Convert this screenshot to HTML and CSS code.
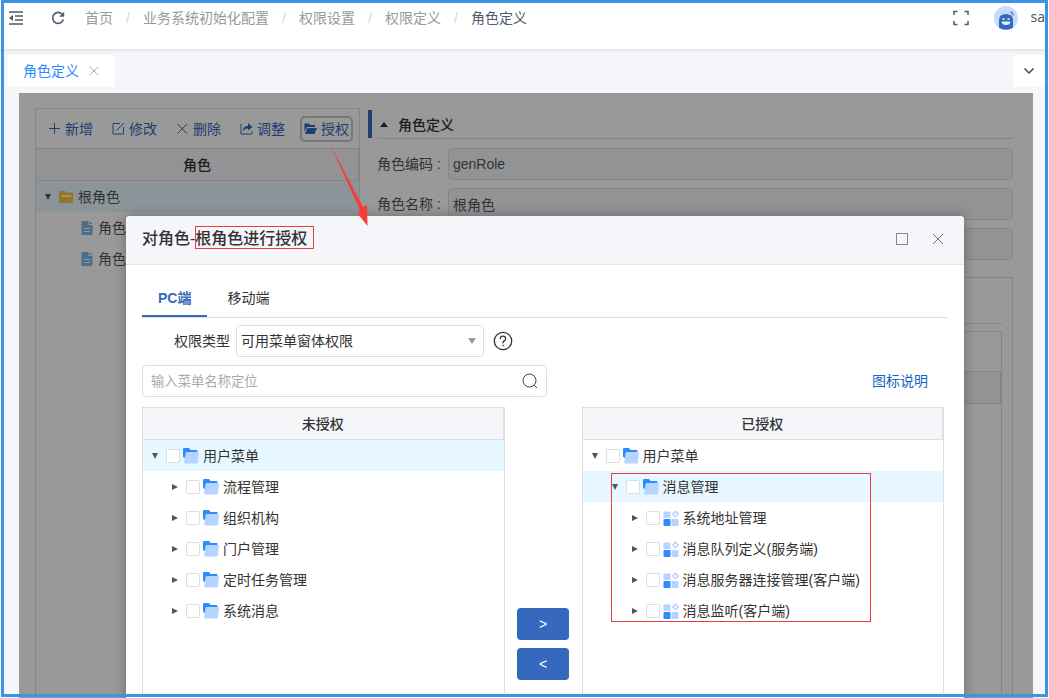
FILE: index.html
```html
<!DOCTYPE html>
<html lang="zh-CN">
<head>
<meta charset="utf-8">
<title>角色定义</title>
<link rel="stylesheet" href="styles.css">
</head>
<body>
<svg class="sprite" aria-hidden="true">
  <symbol id="i-folder" viewBox="0 0 16 16">
    <path d="M0 1.2Q0 0 1.200 0H6L7.500 2H13.500Q14.500 2 14.500 3V8H2V10Q0 10 0 8Z" fill="#2a8cff"/>
    <path d="M4 4H15Q16 4 15.900 5L15 14Q14.900 15.500 13.500 15.500H2.500Q1 15.500 1.200 14L2.500 5.200Q2.700 4 4 4Z" fill="#b5d4ff"/>
  </symbol>
  <symbol id="i-app" viewBox="0 0 16 16">
    <rect x="0.500" y="1.500" width="7" height="6.500" rx="1" fill="#b5d4ff"/>
    <rect x="0.500" y="9" width="7" height="7" rx="1" fill="#2a8cff"/>
    <rect x="8.500" y="9" width="7" height="7" rx="1" fill="#b5d4ff"/>
    <path d="M12.500 1.200L15.300 4L12.500 6.800L9.700 4Z" fill="none" stroke="#b5d4ff" stroke-width="1.500"/>
  </symbol>
  <symbol id="i-down" viewBox="0 0 8 8"><path d="M1 1H7L4 7Z" fill="#555"/></symbol>
  <symbol id="i-right" viewBox="0 0 8 8"><path d="M1 1V7L7 4Z" fill="#555"/></symbol>
  <symbol id="i-close" viewBox="0 0 12 12"><path d="M1 1L11 11M11 1L1 11" fill="none" stroke="currentColor"/></symbol>
  <symbol id="i-file" viewBox="0 0 12 14">
    <path d="M1.500 0H7.500V4H11.500V12.500Q11.500 14 10 14H1.500Q0.500 14 0.500 13V1Q0.500 0 1.500 0ZM8.500 0L11.500 3H8.500Z" fill="#7fb9e8"/>
    <path d="M3 7.500H9M3 10.500H9" stroke="#fff"/>
  </symbol>
</svg>

<div class="page">
  <header class="topbar">
    <button class="icon-btn" aria-label="收起菜单">
      <svg width="16" height="14" viewBox="0 0 16 14"><path d="M1 1H15M7 5H15M7 9H15M1 13H15" stroke="#515a6e" stroke-width="1.500"/><path d="M1 7L5 4V10Z" fill="#515a6e"/></svg>
    </button>
    <button class="icon-btn refresh" aria-label="刷新">
      <svg width="14" height="14" viewBox="0 0 14 14"><path d="M11.500 3.500A5.500 5.500 0 1 0 12.400 8.500" fill="none" stroke="#515a6e" stroke-width="1.600"/><path d="M13.200 0.800V5.800H8.200Z" fill="#515a6e"/></svg>
    </button>
    <nav aria-label="路径">
      <ol class="crumbs">
        <li><a href="#">首页</a></li>
        <li><a href="#">业务系统初始化配置</a></li>
        <li><a href="#">权限设置</a></li>
        <li><a href="#">权限定义</a></li>
        <li class="current">角色定义</li>
      </ol>
    </nav>
    <div class="user">
      <button class="icon-btn" aria-label="全屏">
        <svg width="16" height="16" viewBox="0 0 16 16"><path d="M1 5V1.500H4.500M11.500 1.500H15V5M15 11V14.500H11.500M4.500 14.500H1V11" fill="none" stroke="#515a6e" stroke-width="1.500"/></svg>
      </button>
      <svg class="avatar" width="24" height="24" viewBox="0 0 24 24"><circle cx="12" cy="12" r="12" fill="#c5dcff"/><path d="M5 21.700V14Q5 8 12 8T19 14V21.700Q12 26 5 21.700Z" fill="#3569bd"/><path d="M8.500 13H10.500M13.500 13H15.500" stroke="#fff" stroke-width="1.500" fill="none"/><path d="M7.500 15.500H16.500Q16 19 12 19T7.500 15.500Z" fill="#e4efff"/><path d="M16 6L17.500 7.500M17.800 5.500L19 8.500M18.500 9L19.800 9" stroke="#3569bd" fill="none"/></svg>
      <span class="username">sa</span>
    </div>
  </header>

  <div class="tabbar">
    <div class="page-tab"><a href="#">角色定义</a>
      <button class="icon-btn muted" aria-label="关闭标签"><svg width="10" height="10"><use href="#i-close"/></svg></button>
    </div>
    <button class="tab-menu" aria-label="更多标签"><svg width="12" height="8" viewBox="0 0 12 8"><path d="M1.500 1.500L6 6L10.500 1.500" fill="none" stroke="#444" stroke-width="1.500"/></svg></button>
  </div>

  <main class="workspace">
    <section class="roles">
      <div class="tools">
        <button><svg width="13" height="13" viewBox="0 0 13 13"><path d="M6.500 1V12M1 6.500H12" stroke="currentColor"/></svg>新增</button>
        <button><svg width="13" height="13" viewBox="0 0 13 13"><path d="M8 1.500H1V12H11.500V5M4.500 8.500L12 1" fill="none" stroke="currentColor"/></svg>修改</button>
        <button><svg width="13" height="13" viewBox="0 0 13 13"><path d="M1.500 2L11 11.500M11 2L1.500 11.500" stroke="currentColor"/></svg>删除</button>
        <button><svg width="13" height="13" viewBox="0 0 13 13"><path d="M1 2V12H12V9" fill="none" stroke="currentColor"/><path d="M3 9Q3 4 8 4V1L12.500 5L8 8.500V6.500Q5 6 3 9Z" fill="currentColor"/></svg>调整</button>
        <button class="focused"><svg width="13" height="13" viewBox="0 0 13 13"><path d="M0.500 1.500H5L6 3H11V5H3L0.500 10ZM3.500 6H13L10.500 12H1Z" fill="currentColor"/></svg>授权</button>
      </div>
      <h2 class="list-head">角色</h2>
      <ul class="tree role-tree">
        <li class="row selected"><svg class="caret" width="8" height="8"><use href="#i-down"/></svg><svg width="14" height="12" viewBox="0 0 14 12"><path d="M0 0H6L7 1.500H14V12H0Z" fill="#f5c343"/><path d="M2 5H12" stroke="#fff" stroke-width="1.500"/></svg><span>根角色</span></li>
        <li class="row leaf"><svg width="12" height="14"><use href="#i-file"/></svg><span>角色管理</span></li>
        <li class="row leaf"><svg width="12" height="14"><use href="#i-file"/></svg><span>角色查询</span></li>
      </ul>
    </section>

    <section class="detail">
      <div class="detail-title"><h2><svg width="8" height="5" viewBox="0 0 8 5"><path d="M0 5L4 0L8 5Z" fill="#333"/></svg>角色定义</h2></div>
      <form class="fields">
        <label for="code">角色编码 :</label><input id="code" value="genRole" readonly>
        <label for="name">角色名称 :</label><input id="name" value="根角色" readonly>
        <label for="note"></label><input id="note" aria-label="备注" readonly>
      </form>
      <div class="sub"><div class="sub-tabs"></div><div class="sub-grid"><div class="sub-tools"></div><div class="sub-head"></div></div></div>
    </section>

    <div class="mask"></div>

    <div class="dialog" role="dialog" aria-labelledby="dlg-title">
      <div class="dialog-head">
        <h1 id="dlg-title">对角色-<span class="marked">根角色进行授权</span></h1>
        <div class="window-btns">
          <button class="icon-btn" aria-label="最大化"><svg width="12" height="12" viewBox="0 0 12 12"><rect x="0.500" y="0.500" width="11" height="11" fill="none" stroke="#888"/></svg></button>
          <button class="icon-btn" aria-label="关闭"><svg width="12" height="12"><use href="#i-close"/></svg></button>
        </div>
      </div>
      <div class="dialog-body">
        <div class="tabs" role="tablist">
          <button role="tab" aria-selected="true" class="active">PC端</button>
          <button role="tab" aria-selected="false">移动端</button>
        </div>
        <div class="type-line">
          <label for="type">权限类型</label>
          <select id="type"><option>可用菜单窗体权限</option></select>
          <button class="icon-btn help" aria-label="帮助"><svg width="20" height="20" viewBox="0 0 20 20"><circle cx="10" cy="10" r="8.700" fill="none" stroke="#333" stroke-width="1.300"/><path d="M7.300 8Q7.300 5.200 10 5.200T12.700 7.800Q12.700 9 11.200 9.900T10 12.300M10 13.800V15.300" fill="none" stroke="#333" stroke-width="1.300"/></svg></button>
        </div>
        <div class="search-line">
          <div class="search">
            <input type="search" placeholder="输入菜单名称定位" aria-label="输入菜单名称定位">
            <button class="icon-btn" aria-label="搜索"><svg width="16" height="16" viewBox="0 0 16 16"><circle cx="7.500" cy="7.500" r="6.500" fill="none" stroke="#444"/><path d="M12.300 12.300L15 15" stroke="#444"/></svg></button>
          </div>
          <a class="legend" href="#">图标说明</a>
        </div>
        <div class="transfer">
          <section class="panel">
            <h2 class="list-head">未授权</h2>
            <ul class="tree">
              <li class="row selected"><svg class="caret" width="8" height="8"><use href="#i-down"/></svg><label><input type="checkbox"><svg width="16" height="16"><use href="#i-folder"/></svg>用户菜单</label></li>
              <li class="row l2"><svg class="caret" width="8" height="8"><use href="#i-right"/></svg><label><input type="checkbox"><svg width="16" height="16"><use href="#i-folder"/></svg>流程管理</label></li>
              <li class="row l2"><svg class="caret" width="8" height="8"><use href="#i-right"/></svg><label><input type="checkbox"><svg width="16" height="16"><use href="#i-folder"/></svg>组织机构</label></li>
              <li class="row l2"><svg class="caret" width="8" height="8"><use href="#i-right"/></svg><label><input type="checkbox"><svg width="16" height="16"><use href="#i-folder"/></svg>门户管理</label></li>
              <li class="row l2"><svg class="caret" width="8" height="8"><use href="#i-right"/></svg><label><input type="checkbox"><svg width="16" height="16"><use href="#i-folder"/></svg>定时任务管理</label></li>
              <li class="row l2"><svg class="caret" width="8" height="8"><use href="#i-right"/></svg><label><input type="checkbox"><svg width="16" height="16"><use href="#i-folder"/></svg>系统消息</label></li>
            </ul>
          </section>
          <div class="moves">
            <button aria-label="授权">&gt;</button>
            <button aria-label="取消授权">&lt;</button>
          </div>
          <section class="panel">
            <h2 class="list-head">已授权</h2>
            <ul class="tree">
              <li class="row"><svg class="caret" width="8" height="8"><use href="#i-down"/></svg><label><input type="checkbox"><svg width="16" height="16"><use href="#i-folder"/></svg>用户菜单</label></li>
              <li class="row l2 selected"><svg class="caret" width="8" height="8"><use href="#i-down"/></svg><label><input type="checkbox"><svg width="16" height="16"><use href="#i-folder"/></svg>消息管理</label></li>
              <li class="row l3"><svg class="caret" width="8" height="8"><use href="#i-right"/></svg><label><input type="checkbox"><svg width="16" height="16"><use href="#i-app"/></svg>系统地址管理</label></li>
              <li class="row l3"><svg class="caret" width="8" height="8"><use href="#i-right"/></svg><label><input type="checkbox"><svg width="16" height="16"><use href="#i-app"/></svg>消息队列定义(服务端)</label></li>
              <li class="row l3"><svg class="caret" width="8" height="8"><use href="#i-right"/></svg><label><input type="checkbox"><svg width="16" height="16"><use href="#i-app"/></svg>消息服务器连接管理(客户端)</label></li>
              <li class="row l3"><svg class="caret" width="8" height="8"><use href="#i-right"/></svg><label><input type="checkbox"><svg width="16" height="16"><use href="#i-app"/></svg>消息监听(客户端)</label></li>
            </ul>
            <div class="mark-box"></div>
          </section>
        </div>
      </div>
    </div>
    <svg class="arrow" width="42" height="84" viewBox="0 0 42 84" aria-hidden="true"><path d="M1 0L34 63L38 61L38.500 82L29 70L31 66Z" fill="#fb3a3a"/></svg>
  </main>
  <div class="frame"></div>
</div>
</body>
</html>
```
FILE: styles.css
```css
* { box-sizing: border-box; }

body {
  margin: 0;
  font: 14px/20px "Liberation Sans", "Noto Sans CJK SC", sans-serif;
  color: #333;
}

h1, h2, ul, ol { margin: 0; padding: 0; list-style: none; }
h1, h2 { font-size: 14px; font-weight: 500; }
a { color: inherit; text-decoration: none; }
svg { flex: none; display: block; }
button, select { font: inherit; color: inherit; }
.sprite { position: absolute; width: 0; height: 0; }

.page {
  position: relative;
  display: flex;
  flex-direction: column;
  height: 100vh;
  overflow: hidden;
  background: #f5f6f9;
}

.icon-btn {
  display: flex;
  padding: 0;
  border: 0;
  background: none;
  color: #777;
}

/* top bar */
.topbar {
  flex: none;
  display: flex;
  align-items: flex-start;
  height: 49px;
  padding: 6px 4px 0 8px;
  background: #fff;
  box-shadow: 0 1px 4px rgba(0, 21, 41, 0.12);
  white-space: nowrap;
  z-index: 1;
}
.topbar .icon-btn { height: 24px; align-items: center; }
.topbar .refresh { margin: 0 20px 0 27px; }
.crumbs { display: flex; line-height: 24px; color: #999; }
.crumbs li + li::before {
  content: "/";
  display: inline-block;
  width: 30px;
  text-align: center;
  color: #d3d6dc;
}
.crumbs .current { color: #515a6e; }
.user { display: flex; margin-left: auto; }
.avatar { margin: 0 12px 0 25px; }
.username { font-family: "Noto Sans", sans-serif; line-height: 22px; color: #515a6e; }

/* page tabs */
.tabbar { flex: none; display: flex; padding: 6px 4px 6px 7px; }
.page-tab {
  display: flex;
  align-items: center;
  gap: 10px;
  height: 32px;
  padding: 0 16px;
  border-radius: 3px;
  background: #fff;
  color: #2a8cff;
}
.muted { color: #999; }
.tab-menu {
  display: flex;
  align-items: center;
  justify-content: center;
  width: 32px;
  margin-left: auto;
  padding: 0;
  border: 0;
  border-radius: 3px 0 0 3px;
  background: #fff;
}

/* workspace */
.workspace {
  position: relative;
  flex: 1;
  display: flex;
  gap: 8px;
  min-height: 0;
  margin: 0 16px 0 19px;
  padding: 15px 20px 0 16px;
  background: #fff;
}
.mask { position: absolute; inset: 0; background: rgba(0, 0, 0, 0.4); }

.roles {
  width: 325px;
  border: 1px solid #dcdee2;
  border-bottom: 0;
}
.tools {
  display: flex;
  align-items: center;
  gap: 19px;
  height: 39px;
  padding-left: 12px;
}
.tools button {
  display: flex;
  align-items: center;
  gap: 4px;
  height: 18px;
  padding: 0;
  border: 0;
  background: none;
  color: #3569bd;
  white-space: nowrap;
}
.tools .focused { outline: 2px solid #c4c6ca; outline-offset: 2px; border-radius: 1px; }

.list-head {
  height: 33px;
  border: 1px solid #dcdee2;
  border-left: 0;
  background: #f5f6fa;
  line-height: 32px;
  text-align: center;
}
.row {
  display: flex;
  align-items: center;
  height: 31px;
  padding-left: 8px;
  white-space: nowrap;
}
.row.l2 { padding-left: 28px; }
.row.l3 { padding-left: 48px; }
.row.selected { background: #e6f7ff; }
.row label { display: flex; align-items: center; }
.row label svg { margin: 0 4px 0 3px; }
.caret { margin-right: 7px; }
.role-tree { color: #555; }
.role-tree span { margin-left: 5px; }
.role-tree .leaf { padding-left: 45px; }

.detail { flex: 1; }
.detail-title { display: flex; margin: 2px 0 9px; }
.detail-title::before { content: ""; width: 4px; height: 28px; margin-right: 6px; background: #3569bd; }
.detail-title h2 {
  flex: 1;
  display: flex;
  align-items: center;
  gap: 10px;
  height: 29px;
  padding: 1px 0 0 2px;
  border-bottom: 1px solid #dcdee2;
}
.fields {
  display: grid;
  grid-template-columns: 71px 1fr;
  row-gap: 8px;
  align-items: center;
  padding-left: 9px;
  color: #555;
}
.fields input {
  height: 32px;
  padding: 0 4px;
  border: 1px solid #dcdee2;
  border-radius: 4px;
  background: #f4f5f8;
  font: inherit;
  color: #555;
}
.sub {
  height: 440px;
  margin: 17px 0 0 9px;
  padding: 0 10px;
  border: 1px solid #dcdee2;
}
.sub-tabs { height: 46px; border-bottom: 1px solid #dcdee2; }
.sub-grid { height: 394px; margin-top: 7px; border: 1px solid #dcdee2; }
.sub-tools { height: 39px; }
.sub-head { height: 33px; border: 1px solid #dcdee2; background: #f4f5f8; }

/* authorisation dialog */
.dialog {
  position: absolute;
  top: 123px;
  left: 107px;
  right: 69px;
  border-radius: 4px 4px 0 0;
  background: #fff;
  box-shadow: 0 0 12px rgba(0, 0, 0, 0.3);
}
.dialog-head {
  display: flex;
  align-items: center;
  justify-content: space-between;
  height: 49px;
  padding: 0 20px 2px 16px;
  border-bottom: 1px solid #e6e8ee;
  border-radius: 4px 4px 0 0;
  background: #f5f6fa;
}
.dialog-head h1 { font-size: 16px; }
.marked { position: relative; }
.marked::after {
  content: "";
  position: absolute;
  inset: -4px -7px -2px 0;
  border: 1px solid #f03c3c;
}
.window-btns { display: flex; gap: 24px; }
.dialog-body { padding: 15px 16px; }
.tabs { display: flex; border-bottom: 1px solid #dcdee2; }
.tabs button {
  height: 37px;
  padding: 0 16px;
  border: 0;
  border-bottom: 2px solid transparent;
  background: none;
}
.tabs button + button { padding-left: 20px; }
.tabs .active { border-color: #3569bd; font-weight: bold; color: #3569bd; }

.type-line { display: flex; align-items: center; margin: 7px 0 8px; padding-left: 32px; }
.type-line select {
  appearance: none;
  width: 248px;
  height: 32px;
  margin: 0 9px 0 6px;
  padding: 0 4px;
  border: 1px solid #dcdee2;
  border-radius: 4px;
  background: #fff url("data:image/svg+xml,%3Csvg xmlns='http://www.w3.org/2000/svg' width='8' height='6'%3E%3Cpath d='M0 0H8L4 6Z' fill='%23999'/%3E%3C/svg%3E") right 7px center no-repeat;
}

.search-line {
  display: flex;
  align-items: center;
  justify-content: space-between;
  margin-bottom: 10px;
  padding-right: 20px;
}
.search {
  display: flex;
  align-items: center;
  width: 405px;
  height: 32px;
  padding: 0 8px;
  border: 1px solid #dcdee2;
  border-radius: 4px;
}
.search input {
  flex: 1;
  padding: 0;
  border: 0;
  outline: 0;
  background: none;
  font-family: inherit;
}
.search input::placeholder { color: #aaa; }
.legend { color: #1565c0; }

.transfer {
  display: grid;
  grid-template-columns: 1fr 77px 1fr;
  min-height: 474px;
  padding-right: 4px;
}
.panel { position: relative; border: 1px solid #dcdee2; border-top: 0; }
.moves {
  display: flex;
  flex-direction: column;
  align-items: center;
  justify-content: center;
  gap: 8px;
}
.moves button {
  width: 52px;
  height: 32px;
  border: 0;
  border-radius: 4px;
  background: #3569bd;
  color: #fff;
}
input[type="checkbox"] {
  appearance: none;
  width: 14px;
  height: 14px;
  margin: 0;
  border: 1px solid #dcdee2;
  border-radius: 2px;
  background: #fff;
}

/* annotations */
.mark-box {
  position: absolute;
  top: 66px;
  left: 28px;
  width: 260px;
  height: 149px;
  border: 1px solid #f03c3c;
}
.arrow { position: absolute; top: 51px; left: 310px; }
.frame {
  position: absolute;
  inset: 0 1px 1px;
  border: 3px solid #3b94e6;
  pointer-events: none;
  z-index: 2;
}
```
